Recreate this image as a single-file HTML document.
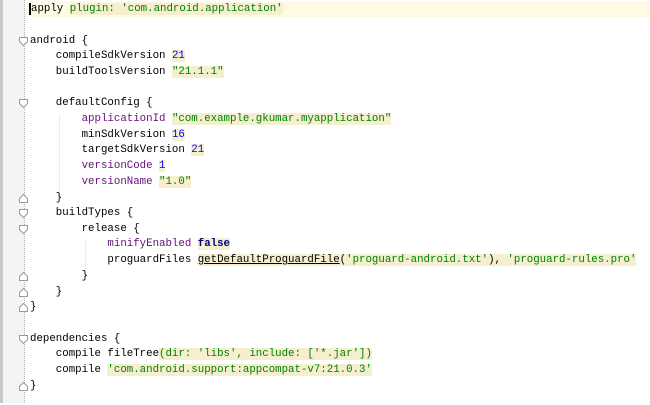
<!DOCTYPE html>
<html><head><style>
body{margin:0;width:650px;height:403px;background:#fff;overflow:hidden;position:relative;font-family:"Liberation Mono",monospace;font-size:10.75px;}
.gut{position:absolute;left:0;top:0;width:3px;height:403px;background:#c8c8c8;}
.gut2{position:absolute;left:3px;top:0;width:21px;height:403px;background:#f4f4f4;}
.fold{position:absolute;left:24px;top:0;height:403px;border-left:1px dotted #b0b0b0;}
.cur{position:absolute;left:24px;top:1px;width:626px;height:16px;background:#fffae3;}
.w{position:absolute;left:0;top:2px;width:650px;height:403px;}
.l{position:absolute;left:30px;white-space:pre;line-height:15.6px;color:#000;}
.s{color:#008000;font-weight:normal;}
.h{background:#f5efcf;}
.n{color:#0000ff;}
.p{color:#660e7a;}
.g{color:#008000;}
.u{text-decoration:underline;}
.guide{position:absolute;border-left:1px solid #ececec;}
</style></head><body>
<div class="gut"></div><div class="gut2"></div>
<div class="cur"></div>
<div class="fold"></div>
<div class="w">
<div class="guide" style="left:59px;top:112px;height:82px"></div>
<div class="guide" style="left:85px;top:237px;height:30px"></div>
<div class="l" style="top:0px"><span style="border-left:2px solid #000;margin-left:-1px">a</span>pply <span class="h"><span class="g">plugin: 'com.android.application'</span></span></div>
<div class="l" style="top:32px">android {</div>
<div class="l" style="top:47px">    compileSdkVersion <span class="n h">21</span></div>
<div class="l" style="top:63px">    buildToolsVersion <span class="s h">"21.1.1"</span></div>
<div class="l" style="top:94px">    defaultConfig {</div>
<div class="l" style="top:110px">        <span class="p">applicationId</span> <span class="s h">"com.example.gkumar.myapplication"</span></div>
<div class="l" style="top:126px">        minSdkVersion <span class="n h">16</span></div>
<div class="l" style="top:141px">        targetSdkVersion <span class="n h">21</span></div>
<div class="l" style="top:157px">        <span class="p">versionCode</span> <span class="n h">1</span></div>
<div class="l" style="top:173px">        <span class="p">versionName</span> <span class="s h">"1.0"</span></div>
<div class="l" style="top:189px">    }</div>
<div class="l" style="top:204px">    buildTypes {</div>
<div class="l" style="top:220px">        release {</div>
<div class="l" style="top:235px">            <span class="p">minifyEnabled</span> <span class="h" style="color:#000080;font-weight:bold">false</span></div>
<div class="l" style="top:251px">            proguardFiles <span class="h"><span class="u">getDefaultProguardFile</span>(<span class="g">'proguard-android.txt'</span>), <span class="g">'proguard-rules.pro'</span></span></div>
<div class="l" style="top:267px">        }</div>
<div class="l" style="top:283px">    }</div>
<div class="l" style="top:298px">}</div>
<div class="l" style="top:330px">dependencies {</div>
<div class="l" style="top:345px">    compile fileTree<span class="h g">(dir: 'libs', include: ['*.jar'])</span></div>
<div class="l" style="top:361px">    compile <span class="h g">'com.android.support:appcompat-v7:21.0.3'</span></div>
<div class="l" style="top:377px">}</div>
<svg style="position:absolute;left:0;top:0" width="30" height="403">
<g fill="#fff" stroke="#999" stroke-width="1">
<path d="M19.5 35.5h8v4l-4 4l-4-4z"/>
<path d="M19.5 97.5h8v4l-4 4l-4-4z"/>
<path d="M19.5 207.5h8v4l-4 4l-4-4z"/>
<path d="M19.5 223.5h8v4l-4 4l-4-4z"/>
<path d="M19.5 333.5h8v4l-4 4l-4-4z"/>
<path d="M19.5 200.5h8v-4l-4-4l-4 4z"/>
<path d="M19.5 278.5h8v-4l-4-4l-4 4z"/>
<path d="M19.5 294.5h8v-4l-4-4l-4 4z"/>
<path d="M19.5 309.5h8v-4l-4-4l-4 4z"/>
<path d="M19.5 388.5h8v-4l-4-4l-4 4z"/>
</g>
</svg>
</div>
</body></html>
